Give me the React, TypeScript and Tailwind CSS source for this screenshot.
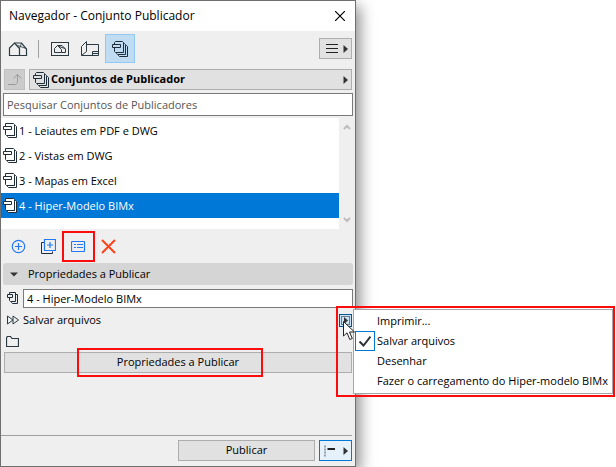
import { useState } from 'react'
import type { ReactNode } from 'react'

const publisherSets = [
  '1 - Leiautes em PDF e DWG',
  '2 - Vistas em DWG',
  '3 - Mapas em Excel',
  '4 - Hiper-Modelo BIMx',
]

const outputMethods = [
  'Imprimir...',
  'Salvar arquivos',
  'Desenhar',
  'Fazer o carregamento do Hiper-modelo BIMx',
]

function HouseIcon() {
  return (
    <svg width="20" height="16" viewBox="0 0 20 16" fill="none" stroke="#2b3a42" strokeWidth="1.2">
      <path d="M1.5 14.5V7L6.5 2L11.5 7.5V14.5Z" />
      <path d="M6.5 2H13.5L18.5 8V14.5H11.5" />
      <path d="M11.5 7.5L13.5 2M8.5 4L18 7.5" strokeWidth="0.8" />
    </svg>
  )
}

function ViewMapIcon() {
  return (
    <svg width="20" height="16" viewBox="0 0 20 16" fill="none" stroke="#2b3a42">
      <rect x="1.5" y="1.5" width="17" height="13" />
      <path d="M4.5 11.5V7.5L7.5 4.5L11.5 8.5V11.5Z" />
      <path d="M7.5 4.5H12L15.5 8V11.5H11.5M9 5.5L15 7.5" />
    </svg>
  )
}

function LayoutIcon() {
  return (
    <svg width="20" height="16" viewBox="0 0 20 16" fill="none" stroke="#2b3a42">
      <path d="M6.5 3.5H18.5V14.5H1.5" />
      <path d="M6.5 0.5V10.5L1.5 14.5V5.5Z" />
      <path d="M18.5 10.5H12.5V14.5M12.5 12.5H18.5" />
    </svg>
  )
}

function PublisherIcon() {
  return (
    <svg width="18" height="18" viewBox="0 0 18 18" fill="none" stroke="#1f2d38">
      <path d="M3.5 4.5V2.5L4.5 1.5H11.5L12.5 2.5V12.5H4.5L3.5 11.5V7.5" />
      <path d="M1.5 4.5H9.5V7.5H1.5Z" />
      <path d="M12.5 3.5H13.5L14.5 4.5V14.5H6.5L5.5 13.5V12.5" />
      <path d="M14.5 5.5H15.5L16.5 6.5V16.5H8.5L7.5 15.5V14.5" />
    </svg>
  )
}

function SetIcon({ selected = false }: { selected?: boolean }) {
  return (
    <svg
      width="15"
      height="16"
      viewBox="0 0 15 16"
      fill={selected ? '#fff' : 'none'}
      stroke="#1f2d38"
    >
      <path d="M11.5 2.5H12.5L13.5 3.5V14.5H5.5L4.5 13.5V12.5H11.5Z" />
      <path d="M2.5 3.5V0.5H10.5L11.5 1.5V12.5H3.5L2.5 11.5V6.5" />
      <path d="M0.5 3.5H8.5V6.5H0.5Z" />
    </svg>
  )
}

function PagesIcon() {
  return (
    <svg width="12" height="13" viewBox="0 0 12 13" fill="none" stroke="#1f2d38">
      <path d="M2.5 2.5V0.5H8.5V9.5H3.5L2.5 8.5V5.5" />
      <path d="M0.5 2.5H5.5V5.5H0.5Z" />
      <path d="M8.5 2.5H10.5V11.5H5.5L4.5 10.5V9.5" />
    </svg>
  )
}

function RightArrow() {
  return (
    <svg width="5" height="8" viewBox="0 0 5 8" fill="#333">
      <path d="M0.5 0L5 4L0.5 8Z" />
    </svg>
  )
}

function ScrollChevron({ down = false }: { down?: boolean }) {
  return (
    <svg width="8" height="6" viewBox="0 0 8 6" fill="none" stroke="#bdbdbd" strokeWidth="2">
      <path d={down ? 'M1 1L4 4L7 1' : 'M1 5L4 2L7 5'} />
    </svg>
  )
}

function Highlight({ className, children }: { className: string; children?: ReactNode }) {
  return (
    <div className={`pointer-events-none absolute border-2 border-[#fb0d0d] ${className}`}>{children}</div>
  )
}

export default function App() {
  const [selectedSet, setSelectedSet] = useState(3)
  const [method, setMethod] = useState(1)
  const [name, setName] = useState('4 - Hiper-Modelo BIMx')

  return (
    <div className="flex min-h-screen flex-col bg-white pr-[260px] font-['Open_Sans','Noto_Sans',sans-serif] text-[11px] text-black">
      <main className="flex flex-1 flex-col border border-[#6f6f6f] bg-[#efefef] shadow-[4px_6px_14px_rgba(0,0,0,0.45)]">
        <header className="flex h-[30px] items-center justify-between bg-white pr-2.5 pl-2">
          <h1 className="text-xs">Navegador - Conjunto Publicador</h1>
          <button aria-label="Fechar">
            <svg width="10" height="10" viewBox="0 0 10 10" stroke="#000" strokeWidth="1.2">
              <path d="M0 0L10 10M10 0L0 10" />
            </svg>
          </button>
        </header>

        <div className="flex h-[35px] items-center pr-[3px] pl-[7px]">
          <button aria-label="Mapa do projeto"><HouseIcon /></button>
          <span className="ml-2.5 h-[18px] w-px bg-[#a0a0a0]" />
          <button aria-label="Mapa de vistas" className="ml-[11px]"><ViewMapIcon /></button>
          <button aria-label="Leiautes" className="ml-2.5"><LayoutIcon /></button>
          <button
            aria-label="Conjuntos de Publicador"
            className="ml-[5px] flex h-[29px] w-[30px] items-center justify-center border border-[#90c8f6] bg-[#c0dcf3]"
          >
            <PublisherIcon />
          </button>
          <button
            aria-label="Menu"
            className="ml-auto flex h-[21px] w-[33px] items-center justify-between border border-[#adadad] bg-[#e1e1e1] pr-[3px] pl-1.5"
          >
            <svg width="12" height="10" viewBox="0 0 12 10" stroke="#222">
              <path d="M0 0.5H12M0 4.5H12M0 8.5H12" />
            </svg>
            <RightArrow />
          </button>
        </div>

        <div className="mt-[3px] flex gap-1 px-[3px]">
          <button
            aria-label="Subir um nível"
            disabled
            className="flex h-[21px] w-[21px] items-center justify-center border border-[#bfbfbf] bg-[#cccccc]"
          >
            <svg width="15" height="13" viewBox="0 0 15 13" fill="none" stroke="#9a9a9a">
              <path d="M1 11.5H8.5L10.5 9.5V1.5M6.5 5.5L10.5 1.5L14.5 5.5" />
            </svg>
          </button>
          <button className="flex h-[21px] flex-1 items-center border border-[#adadad] bg-[#e1e1e1] pr-[3px] pl-0.5">
            <PublisherIcon />
            <span className="ml-px flex-1 text-left font-bold">Conjuntos de Publicador</span>
            <RightArrow />
          </button>
        </div>

        <input
          type="search"
          aria-label="Pesquisar"
          placeholder="Pesquisar Conjuntos de Publicadores"
          className="mx-0.5 mt-[3px] h-[23px] border border-[#7a7a7a] bg-white px-[3px] outline-none placeholder:text-[#555]"
        />

        <div className="mt-0.5 flex h-[111px]">
          <ul className="flex-1 bg-white">
            {publisherSets.map((set, index) => (
              <li key={set}>
                <button
                  onClick={() => setSelectedSet(index)}
                  className={`flex h-[25px] w-full items-center gap-px pt-px pl-0.5 text-left ${
                    selectedSet === index ? 'bg-[#0078d7] text-white' : ''
                  }`}
                >
                  <SetIcon selected={selectedSet === index} />
                  {set}
                </button>
              </li>
            ))}
          </ul>
          <div className="flex w-4 flex-col items-center justify-between py-1.5">
            <ScrollChevron />
            <ScrollChevron down />
          </div>
        </div>

        <div className="flex h-[34px] items-center pl-2.5">
          <button aria-label="Novo conjunto">
            <svg width="15" height="15" viewBox="0 0 15 15" fill="none" stroke="#2478f5" strokeWidth="1.2">
              <circle cx="7.5" cy="7.5" r="6.2" />
              <path d="M7.5 4V11M4 7.5H11" />
            </svg>
          </button>
          <button aria-label="Duplicar" className="ml-[15px]">
            <svg width="15" height="15" viewBox="0 0 15 15" fill="none">
              <path d="M3.5 3.5H0.5V14.5H11.5V12.5" stroke="#1f2d38" />
              <path d="M3.5 0.5H14.5V11.5H3.5ZM9 3V9M6 6H12" stroke="#2478f5" strokeWidth="1.2" />
            </svg>
          </button>
          <button aria-label="Propriedades" className="relative ml-[15px]">
            <svg width="15" height="15" viewBox="0 0 15 15" fill="none" stroke="#2478f5" strokeWidth="1.2">
              <rect x="0.5" y="2.5" width="13" height="10" rx="0.5" />
              <path d="M3 5.5H5M6 5.5H12M3 8.5H5M6 8.5H12" />
            </svg>
            <Highlight className="-inset-x-[9px] -inset-y-2" />
          </button>
          <button aria-label="Excluir" className="ml-[15px]">
            <svg width="15" height="15" viewBox="0 0 15 15" fill="none" stroke="#f9441c" strokeWidth="2">
              <path d="M1 1L14 14M14 1L1 14" />
            </svg>
          </button>
        </div>

        <h2 className="mx-0.5 rounded-[3px] bg-[#d5d5d5]">
          <button className="flex h-[22px] w-full items-center gap-2.5 pl-[7px]">
            <svg width="8" height="5" viewBox="0 0 8 5" fill="#333">
              <path d="M0 0.5H8L4 4.5Z" />
            </svg>
            Propriedades a Publicar
          </button>
        </h2>

        <label className="mt-1 mr-0.5 ml-1.5 flex items-center gap-1" aria-label="Nome">
          <PagesIcon />
          <input
            value={name}
            onChange={(e) => setName(e.target.value)}
            className="h-[19px] min-w-0 flex-1 border border-[#7a7a7a] bg-white px-[3px] outline-none"
          />
        </label>

        <div className="relative mt-px mr-[3px] ml-1.5 flex h-[22px] items-center gap-1">
          <svg width="12" height="10" viewBox="0 0 12 10" fill="none" stroke="#2b3a42">
            <path d="M0.5 1L6 5L0.5 9ZM6 1L11.5 5L6 9Z" />
          </svg>
          <span>{outputMethods[method]}</span>
          <button
            aria-label="Método de saída"
            className="ml-auto flex h-[13px] w-[13px] items-center justify-center border border-[#00548f] bg-[#cce4f7]"
          >
            <svg width="11" height="11" viewBox="0 0 11 11" fill="none">
              <rect x="1.5" y="1.5" width="8" height="8" stroke="#111" strokeDasharray="1 1" />
              <path d="M4 2L8 5.5L4 9Z" fill="#333" />
            </svg>
          </button>

          <div
            role="menu"
            className="absolute top-0 left-full ml-px w-[260px] border border-[#a5a5aa] bg-white pt-px pb-0.5"
          >
            {outputMethods.map((item, index) => (
              <button
                key={item}
                role="menuitemradio"
                aria-checked={method === index}
                onClick={() => setMethod(index)}
                className="flex h-5 w-full items-center gap-0.5 pl-px whitespace-nowrap"
              >
                <span
                  className={`flex h-5 w-5 items-center justify-center border ${
                    method === index ? 'border-[#0078d7]' : 'border-transparent'
                  }`}
                >
                  {method === index && (
                    <svg width="12" height="12" viewBox="0 0 12 12" fill="none" stroke="#2b3338" strokeWidth="2">
                      <path d="M0.5 6.5L4.5 10.5L11.5 1.5" />
                    </svg>
                  )}
                </span>
                {item}
              </button>
            ))}
            <Highlight className="-top-1 -right-[3px] -bottom-1 -left-[18px]">
              <svg className="absolute top-[13px] left-[5px]" width="13" height="20" viewBox="0 0 13 20">
                <path
                  d="M0.5 0.5V15L4 11.8L6.8 18.5L9.3 17.5L6.5 11H11.5Z"
                  fill="#fff"
                  stroke="#222"
                />
              </svg>
            </Highlight>
          </div>
        </div>

        <div className="flex h-5 items-center pl-[5px]">
          <svg width="13" height="11" viewBox="0 0 13 11" fill="none" stroke="#2b3a42" strokeWidth="1.2">
            <path d="M0.5 10.5V1.5L1.5 0.5H4.5L6 2.5H12.5V10.5Z" />
          </svg>
        </div>

        <button className="mx-[3px] mt-px flex h-[21px] items-center justify-center border border-[#adadad] bg-[#e1e1e1]">
          <span className="relative">
            Propriedades a Publicar
            <Highlight className="-inset-y-1.5 -right-6 -left-10" />
          </span>
        </button>

        <footer className="mt-auto mr-[3px] flex justify-end gap-1 border-t border-[#a0a0a0] pt-1 pb-[5px]">
          <button className="h-[21px] w-[137px] border border-[#adadad] bg-[#e1e1e1]">Publicar</button>
          <button
            aria-label="Opções de publicação"
            className="flex h-[21px] w-[33px] items-center justify-between border border-[#0078d7] bg-[#e5f1fb] pr-[3px] pl-1"
          >
            <svg width="12" height="12" viewBox="0 0 12 12" fill="none">
              <path d="M1 0.5V12" stroke="#9aa0a5" strokeWidth="2" strokeDasharray="2 1" />
              <path d="M3.5 4H11" stroke="#222" strokeWidth="2" />
            </svg>
            <RightArrow />
          </button>
        </footer>
      </main>
    </div>
  )
}
